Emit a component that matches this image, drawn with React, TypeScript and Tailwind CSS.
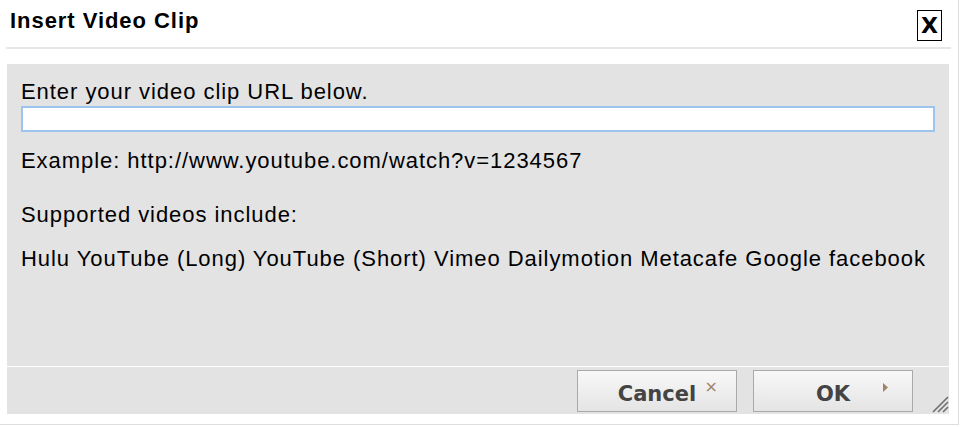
import React, { useState } from 'react';

const App: React.FC = () => {
  const [url, setUrl] = useState('');

  return (
    <div className="w-[964px] h-[427px] bg-white font-['Liberation_Sans',Arial,sans-serif] text-black">
      <div className="w-[959px] h-[425px] border-r border-b border-[#dddddd] flex flex-col">
        {/* header */}
        <div className="h-[47px] flex items-start justify-between pl-[10px] pr-[16px] pt-[8px]">
          <h1 className="text-[22px] font-bold leading-[26px] tracking-[0.95px]">Insert Video Clip</h1>
          <button className="w-[25px] h-[31px] mt-[2px] border border-black flex items-center justify-center text-[22px] font-bold leading-none font-['DejaVu_Sans',sans-serif]">
            X
          </button>
        </div>
        <div className="ml-[6px] mr-[7px] h-[2px] bg-[#e6e6e6]" />

        {/* body */}
        <div className="mt-[15px] ml-[7px] mr-[9px] h-[350px] bg-[#e3e3e3] flex flex-col">
          <div className="flex-1 px-[14px] pt-[15px] text-[22px] leading-[26px] tracking-[0.95px]">
            <p>Enter your video clip URL below.</p>
            <input
              type="text"
              value={url}
              onChange={(e) => setUrl(e.target.value)}
              className="block mt-[1px] w-full h-[26px] bg-white border-2 border-[#9cc4ec] outline-none px-1 text-[16px]"
            />
            <p className="mt-[16px]">Example: http://www.youtube.com/watch?v=1234567</p>
            <p className="mt-[28px]">Supported videos include:</p>
            <p className="mt-[18px] whitespace-nowrap">
              Hulu YouTube (Long) YouTube (Short) Vimeo Dailymotion Metacafe Google facebook
            </p>
          </div>
          <div className="h-[1px] bg-white" />
          <div className="h-[47px] flex items-start pt-[3px] pl-[570px] relative font-['DejaVu_Sans',Verdana,sans-serif]">
            <button className="relative w-[160px] h-[42px] pt-[8px] border border-[#a9a9a9] bg-gradient-to-b from-[#f8f8f8] to-[#e4e4e4] text-[21px] font-bold text-[#444444]">
              Cancel
              <span className="absolute right-[18px] top-[4px] text-[16px] text-[#a08468] font-normal">×</span>
            </button>
            <button className="relative ml-[16px] w-[160px] h-[42px] pt-[8px] border border-[#a9a9a9] bg-gradient-to-b from-[#f8f8f8] to-[#e4e4e4] text-[21px] font-bold text-[#444444]">
              OK
              <svg className="absolute right-[23px] top-[12px]" width="6" height="9" viewBox="0 0 6 9">
                <path d="M0 0 L5 4.5 L0 9 Z" fill="#a08468" />
              </svg>
            </button>
            <svg className="absolute right-[0px] bottom-[1px]" width="19" height="19" viewBox="0 0 19 19">
              <path d="M18 3 L3 18 M18 8 L8 18 M18 13 L13 18" stroke="#6f6f6f" strokeWidth="1.6" />
            </svg>
          </div>
        </div>
      </div>
    </div>
  );
};

export default App;
